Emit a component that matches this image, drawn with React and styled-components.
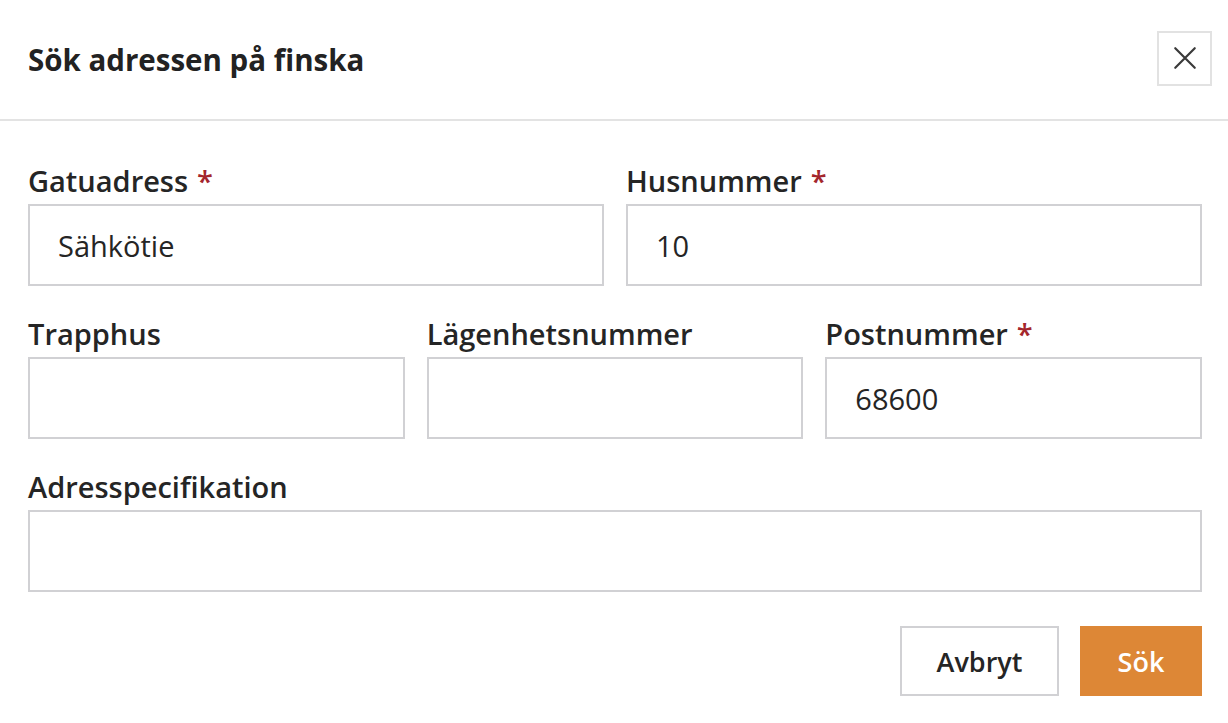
import styled, { createGlobalStyle } from 'styled-components'

const Global = createGlobalStyle`
  body {
    margin: 0;
    background: #fff;
    font-family: "Open Sans", "Noto Sans", sans-serif;
    color: #252525;
  }
  * { box-sizing: border-box; }
`

const Dialog = styled.div`
  width: 1228px;
  height: 723px;
  background: #fff;
`

const Header = styled.div`
  height: 121px;
  display: flex;
  align-items: center;
  justify-content: space-between;
  padding: 0 16px 0 28px;
  border-bottom: 2px solid #e3e3e3;
`

const Title = styled.h1`
  margin: 0;
  font-size: 29.5px;
  font-weight: 700;
  color: #222;
`

const CloseButton = styled.button`
  width: 55px;
  height: 55px;
  border: 2px solid #e2e2e2;
  background: #fff;
  display: flex;
  align-items: center;
  justify-content: center;
  padding: 0;
  margin-top: -3px;
  color: #3a3a3a;
  cursor: pointer;
`

const Form = styled.form`
  padding: 45px 26px 0 28px;
  display: flex;
  flex-direction: column;
  gap: 33px;
`

const Row = styled.div`
  display: grid;
  grid-template-columns: repeat(${p => p.cols}, minmax(0, 1fr));
  column-gap: 22px;
`

const Field = styled.div`
  display: flex;
  flex-direction: column;
  min-width: 0;
`

const Label = styled.label`
  height: 38px;
  font-size: 29px;
  font-weight: 600;
  line-height: 30px;
  color: #252525;
  white-space: nowrap;
`

const Star = styled.span`
  color: #a4262c;
  margin-left: 9px;
`

const Input = styled.input`
  width: 100%;
  min-width: 0;
  height: 82px;
  border: 2px solid #d1d1d4;
  padding: 0 28px;
  font-family: inherit;
  font-size: 29px;
  color: #252525;
  background: #fff;
  outline: none;
`

const Actions = styled.div`
  display: flex;
  justify-content: flex-end;
  gap: 21px;
  padding-top: 1px;
`

const Button = styled.button`
  height: 70px;
  width: ${p => (p.primary ? '122px' : '159px')};
  padding: 0;
  font-family: inherit;
  font-size: 27px;
  font-weight: 600;
  border: 2px solid ${p => (p.primary ? '#dd8736' : '#d1d1d4')};
  background: ${p => (p.primary ? '#dd8736' : '#fff')};
  color: ${p => (p.primary ? '#fff' : '#252525')};
  cursor: pointer;
`

const Close = () => (
  <svg width="26" height="26" viewBox="0 0 24 24" fill="none" stroke="currentColor" strokeWidth="2" strokeLinecap="round">
    <path d="M3 3 L21 21 M21 3 L3 21" />
  </svg>
)

function TextField({ label, required, value }) {
  return (
    <Field>
      <Label>
        {label}
        {required && <Star>*</Star>}
      </Label>
      <Input defaultValue={value} />
    </Field>
  )
}

export default function App() {
  return (
    <>
      <Global />
      <Dialog>
        <Header>
          <Title>Sök adressen på finska</Title>
          <CloseButton aria-label="Stäng">
            <Close />
          </CloseButton>
        </Header>
        <Form onSubmit={e => e.preventDefault()}>
          <Row cols={2}>
            <TextField label="Gatuadress" required value="Sähkötie" />
            <TextField label="Husnummer" required value="10" />
          </Row>
          <Row cols={3}>
            <TextField label="Trapphus" />
            <TextField label="Lägenhetsnummer" />
            <TextField label="Postnummer" required value="68600" />
          </Row>
          <Row cols={1}>
            <TextField label="Adresspecifikation" />
          </Row>
          <Actions>
            <Button type="button">Avbryt</Button>
            <Button type="submit" primary>Sök</Button>
          </Actions>
        </Form>
      </Dialog>
    </>
  )
}
